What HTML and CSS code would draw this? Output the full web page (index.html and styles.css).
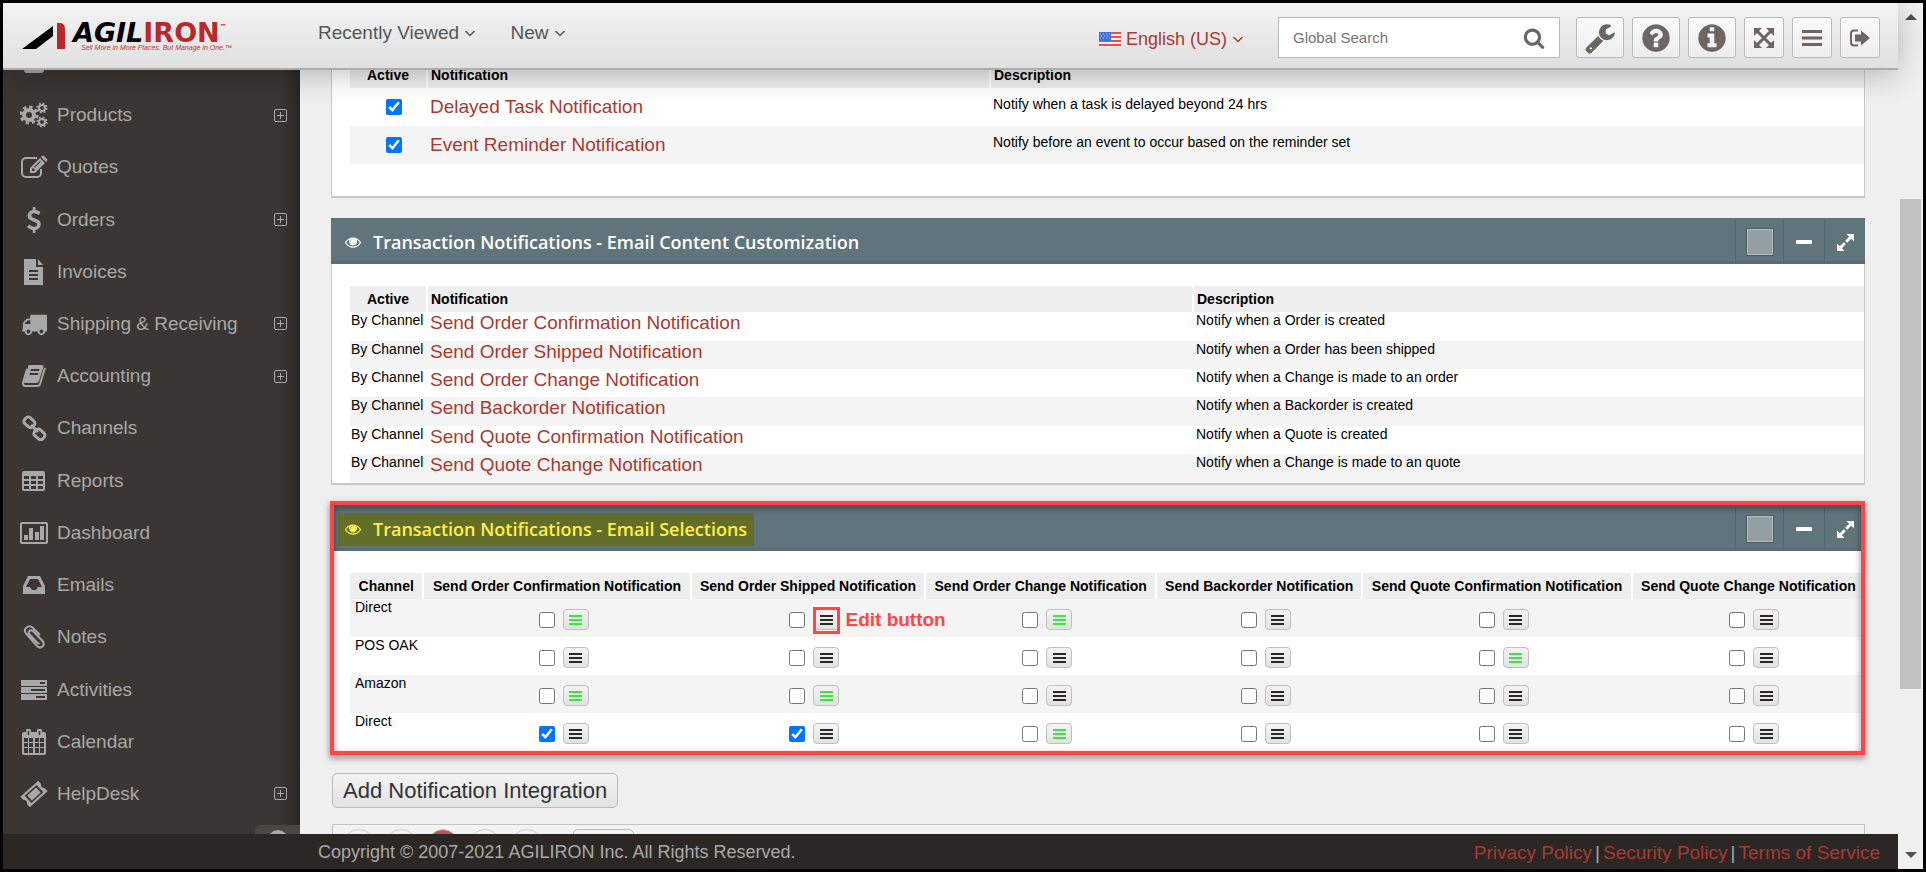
FILE: index.html
```html
<!DOCTYPE html>
<html lang="en">
<head>
    <meta charset="UTF-8">
    <meta name="viewport" content="width=device-width, initial-scale=1">
    <title>Agiliron - Notifications</title>
    <link rel="stylesheet" href="styles.css">
</head>
<body>
    <!-- icon set -->
    <svg class="sprite" aria-hidden="true">
        <symbol id="i-cogs" viewBox="0 0 28 26">
            <g fill="none" stroke="currentColor">
                <circle cx="9" cy="13" r="5" stroke-width="4"/>
                <circle cx="9" cy="13" r="8" stroke-width="3" stroke-dasharray="3.3 2.98"/>
                <circle cx="22" cy="6" r="3" stroke-width="2"/>
                <circle cx="22" cy="6" r="4.6" stroke-width="2" stroke-dasharray="1.8 1.81"/>
                <circle cx="22" cy="20" r="3" stroke-width="2"/>
                <circle cx="22" cy="20" r="4.6" stroke-width="2" stroke-dasharray="1.8 1.81"/>
            </g>
        </symbol>
        <symbol id="i-edit" viewBox="0 0 28 26">
            <path d="M17 4H6a4 4 0 0 0-4 4v11a4 4 0 0 0 4 4h11a4 4 0 0 0 4-4v-4" fill="none" stroke="currentColor" stroke-width="2"/>
            <path fill-rule="evenodd" d="M10 19v-5L20 4l5 5-10 10zM12 15v2h2l1-1-2-2zM14 13l6-6 .7.7-6 6zM21 3l1-1q1-1 2 0l3 3q1 1 0 2l-1 1z" fill="currentColor"/>
        </symbol>
        <symbol id="i-dollar" viewBox="0 0 1792 1792">
            <path fill="currentColor" d="M1362 1185q0 153-99.500 263.500t-258.500 136.500v175q0 14-9 23t-23 9h-135q-13 0-22.500-9.500t-9.500-22.500v-175q-66-9-127.500-31t-101.500-44.500-74-48-46.500-37.500-17.500-18q-17-21-2-41l103-135q7-10 23-12 15-2 24 9l2 2q113 99 243 125 37 8 74 8 81 0 142.500-43t61.500-122q0-28-15-53t-33.500-42-58.500-37.500-66-32-80-32.500q-39-16-61.500-25t-61.500-26.500-62.500-31-56.500-35.500-53.500-42.500-43.500-49-35.500-58-21-66.500-8.500-78q0-138 98-242t255-134v-180q0-13 9.500-22.500t22.500-9.500h135q14 0 23 9t9 23v176q57 6 110.500 23t87 33.500 63.500 37.500 39 29 15 14q17 18 5 38l-81 146q-8 15-23 16-14 3-27-7-3-3-14.500-12t-39-26.500-58.500-32-74.500-26-85.500-11.500q-95 0-155 43t-60 111q0 26 8.500 48t29.500 41.500 39.500 33 56 31 60.500 27 70 27.500q53 20 81 31.500t76 35 75.500 42.500 62 50 53 63.500 31.500 76.500 13 94z"/>
        </symbol>
        <symbol id="i-file" viewBox="0 0 28 26">
            <path fill="currentColor" fill-rule="evenodd" d="M4 0h12v8h7v18H4zM18 0l5 6h-5zM9 11h9v2H9zM9 15h9v2H9zM9 19h9v2H9z"/>
        </symbol>
        <symbol id="i-truck" viewBox="0 0 1792 1792">
            <path fill="currentColor" d="M640 1408q0-52-38-90t-90-38-90 38-38 90 38 90 90 38 90-38 38-90zm-384-512h384v-256h-158q-13 0-22 9l-195 195q-9 9-9 22v30zm1280 512q0-52-38-90t-90-38-90 38-38 90 38 90 90 38 90-38 38-90zm256-1088v1024q0 15-4 26.500t-13.500 18.500-16.500 11.500-23.500 6-22.500 2-25.500 0-22.500-.5q0 106-75 181t-181 75-181-75-75-181h-384q0 106-75 181t-181 75-181-75-75-181h-64q-3 0-22.500.5t-25.500 0-22.500-2-23.500-6-16.500-11.500-13.500-18.500-4-26.500q0-26 19-45t45-19v-320q0-8-.5-35t0-38 2.500-34.500 6.500-37 14-30.500 22.500-30l198-198q19-19 50.500-32t58.500-13h160v-192q0-26 19-45t45-19h1024q26 0 45 19t19 45z"/>
        </symbol>
        <symbol id="i-book" viewBox="0 0 28 26">
            <path fill="currentColor" fill-rule="evenodd" d="M9 2h13q2 0 1.500 2L19 18q-.5 2-3 2H4L8 4q.3-2 1-2zM11 6l-.5 2h8.500l.5-2zM10 10l-.5 2H18l.5-2z"/>
            <path fill="none" stroke="currentColor" stroke-width="2" d="M25 5l-5 16q-.5 2-3 2H5q-2 0-2-3L7 6"/>
        </symbol>
        <symbol id="i-chain" viewBox="0 0 28 26">
            <g fill="none" stroke="currentColor" stroke-width="3">
                <rect x="4" y="3" width="11" height="8" rx="3" transform="rotate(42 9 7)"/>
                <rect x="14" y="15" width="11" height="8" rx="3" transform="rotate(42 19 19)"/>
                <path d="M11 10l7 7"/>
            </g>
        </symbol>
        <symbol id="i-table" viewBox="0 0 28 26">
            <path fill="currentColor" fill-rule="evenodd" d="M4 3h19q2 0 2 2v16q0 2-2 2H4q-2 0-2-2V5q0-2 2-2zM4 8v3h5V8zm7 0v3h5V8zm7 0v3h5V8zM4 13v3h5v-3zm7 0v3h5v-3zm7 0v3h5v-3zM4 18v3h5v-3zm7 0v3h5v-3zm7 0v3h5v-3z"/>
        </symbol>
        <symbol id="i-chart" viewBox="0 0 28 26">
            <rect x="1" y="3" width="26" height="20" rx="1" fill="none" stroke="currentColor" stroke-width="2"/>
            <path fill="currentColor" d="M4 15h4v5H4zM9 8h4v12H9zM15 12h4v8h-4zM20 6h4v14h-4z"/>
        </symbol>
        <symbol id="i-inbox" viewBox="0 0 28 26">
            <path fill="currentColor" fill-rule="evenodd" d="M8 4h12l5 10v8H3v-8zM10 7l-4 8h4l2 3h4l2-3h4l-4-8z"/>
        </symbol>
        <symbol id="i-clip" viewBox="0 0 28 26">
            <path d="M20 11L12.500 3.500q-3-2.500-6 0t-.5 6L17 22q3 3 5.500.5t0-5.500L13 7q-2-1.500-3.500 0t0 3.500l8 8.500q1.500 1 2 0" fill="none" stroke="currentColor" stroke-width="2"/>
        </symbol>
        <symbol id="i-tasks" viewBox="0 0 28 26">
            <path fill="currentColor" fill-rule="evenodd" d="M1 3h26v6H1zM20 5v2h5V5zM1 10h26v6H1zM11 12v2h14v-2zM1 17h26v6H1zM16 19v2h9v-2z"/>
        </symbol>
        <symbol id="i-calendar" viewBox="0 0 28 26">
            <path fill="currentColor" fill-rule="evenodd" d="M4 3h20q2 0 2 2v19q0 2-2 2H4q-2 0-2-2V5q0-2 2-2zM4 9v4h4V9zm5 0v4h4V9zm6 0v4h4V9zm5 0v4h4V9zM4 14v4h4v-4zm5 0v4h4v-4zm6 0v4h4v-4zm5 0v4h4v-4zM4 19v5h4v-5zm5 0v5h4v-5zm6 0v5h4v-5zm5 0v5h4v-5z"/>
            <path d="M8.500 6V2M19.500 6V2" stroke="currentColor" stroke-width="5" stroke-linecap="round"/>
            <path d="M8.500 6V2M19.500 6V2" stroke="#3b3633" stroke-width="1.500"/>
        </symbol>
        <symbol id="i-ticket" viewBox="0 0 28 26">
            <g transform="rotate(-42 14 13)">
                <path fill="currentColor" fill-rule="evenodd" d="M2 6h24v4q-3 3 0 6v4H2v-4q3-3 0-6zM6 8v10h16V8z"/>
                <path fill="currentColor" d="M8 9.500h12v7H8z"/>
            </g>
        </symbol>
        <symbol id="i-plus" viewBox="0 0 13 13">
            <rect x=".5" y=".5" width="12" height="12" rx="1.500" fill="none" stroke="currentColor"/>
            <path d="M3 6.500h7M6.500 3v7" stroke="currentColor"/>
        </symbol>
        <symbol id="i-down" viewBox="0 0 12 12">
            <path d="M1.500 4L6 8.500 10.500 4" fill="none" stroke="currentColor" stroke-width="1.500"/>
        </symbol>
        <symbol id="i-bars" viewBox="0 0 13 10">
            <path d="M0 1h13M0 5h13M0 9h13" stroke="currentColor" stroke-width="2"/>
        </symbol>
        <symbol id="i-eye" viewBox="0 0 1792 1792">
            <path fill="currentColor" d="M1664 960q-152-236-381-353 61 104 61 225 0 185-131.500 316.500t-316.500 131.500-316.500-131.500-131.500-316.500q0-121 61-225-229 117-381 353 133 205 333.500 326.500t434.500 121.500 434.500-121.500 333.500-326.500zm-720-384q0-20-14-34t-34-14q-125 0-214.500 89.500t-89.500 214.500q0 20 14 34t34 14 34-14 14-34q0-86 61-147t147-61q20 0 34-14t14-34zm848 384q0 34-20 69-140 230-376.500 368.500t-499.500 138.500-499.500-139-376.500-368q-20-35-20-69t20-69q140-229 376.500-368t499.500-139 499.500 139 376.500 368q20 35 20 69z"/>
            <circle fill="currentColor" cx="896" cy="832" r="260"/>
        </symbol>
        <symbol id="i-search" viewBox="0 0 1792 1792">
            <path fill="currentColor" d="M1216 832q0-185-131.500-316.500t-316.500-131.500-316.500 131.500-131.500 316.500 131.500 316.500 316.500 131.500 316.500-131.500 131.500-316.500zm512 832q0 52-38 90t-90 38q-54 0-90-38l-343-342q-179 124-399 124-143 0-273.500-55.500t-225-150-150-225-55.500-273.500 55.500-273.500 150-225 225-150 273.500-55.500 273.500 55.500 225 150 150 225 55.500 273.500q0 220-124 399l343 343q37 37 37 90z"/>
        </symbol>
        <symbol id="i-wrench" viewBox="0 0 1792 1792">
            <path fill="currentColor" d="M448 1472q0-26-19-45t-45-19-45 19-19 45 19 45 45 19 45-19 19-45zm644-420l-682 682q-37 37-90 37-52 0-91-37l-106-108q-38-36-38-90 0-53 38-91l681-681q39 98 114.500 173.500t173.500 114.500zm634-435q0 39-23 106-47 134-164.500 217.500t-258.500 83.500q-185 0-316.500-131.500t-131.500-316.500 131.500-316.500 316.500-131.500q58 0 121.500 16.500t107.500 46.500q16 11 16 28t-16 28l-293 169v224l193 107q5-3 79-48.500t135.500-81 70.500-35.500q15 0 23.500 10t8.500 25z"/>
        </symbol>
        <symbol id="i-help" viewBox="0 0 1792 1792">
            <path fill="currentColor" d="M1024 1376v-192q0-14-9-23t-23-9h-192q-14 0-23 9t-9 23v192q0 14 9 23t23 9h192q14 0 23-9t9-23zm256-672q0-88-55.500-163t-138.500-116-170-41q-243 0-371 213-15 24 8 42l132 100q7 6 19 6 16 0 25-12 53-68 86-92 34-24 86-24 48 0 85.500 26t37.500 59q0 38-20 61t-68 45q-63 28-115.500 86.500t-52.500 125.500v36q0 14 9 23t23 9h192q14 0 23-9t9-23q0-19 21.500-49.500t54.500-49.500q32-18 49-28.500t46-35 44.500-48 28-60.500 12.500-81zm384 192q0 209-103 385.500t-279.500 279.500-385.500 103-385.500-103-279.500-279.500-103-385.500 103-385.500 279.500-279.500 385.500-103 385.500 103 279.500 279.500 103 385.500z"/>
        </symbol>
        <symbol id="i-info" viewBox="0 0 1792 1792">
            <path fill="currentColor" d="M1152 1376v-160q0-14-9-23t-23-9h-96v-512q0-14-9-23t-23-9h-320q-14 0-23 9t-9 23v160q0 14 9 23t23 9h96v320h-96q-14 0-23 9t-9 23v160q0 14 9 23t23 9h448q14 0 23-9t9-23zm-128-896v-160q0-14-9-23t-23-9h-192q-14 0-23 9t-9 23v160q0 14 9 23t23 9h192q14 0 23-9t9-23zm640 416q0 209-103 385.500t-279.500 279.500-385.500 103-385.500-103-279.500-279.500-103-385.500 103-385.500 279.500-279.500 385.500-103 385.500 103 279.500 279.500 103 385.500z"/>
        </symbol>
        <symbol id="i-arrows" viewBox="0 0 20 20">
            <path d="M3 3l14 14M17 3L3 17" stroke="currentColor" stroke-width="3"/>
            <path fill="currentColor" d="M0 0h8L0 8zM20 0v8l-8-8zM0 20v-8l8 8zM20 20h-8l8-8z"/>
        </symbol>
        <symbol id="i-menu" viewBox="0 0 20 17">
            <path d="M0 2h20M0 8.500h20M0 15h20" stroke="currentColor" stroke-width="3"/>
        </symbol>
        <symbol id="i-exit" viewBox="0 0 20 17">
            <path d="M8 1H4a3 3 0 0 0-3 3v9a3 3 0 0 0 3 3h4" fill="none" stroke="currentColor" stroke-width="2"/>
            <path fill="currentColor" d="M5 5h6V1l9 7.500-9 7.500v-4H5z"/>
        </symbol>
        <symbol id="i-expand" viewBox="0 0 18 18">
            <path d="M3 15L15 3" stroke="currentColor" stroke-width="3"/>
            <path fill="currentColor" d="M10 0h8v8zM0 10v8h8z"/>
            <path d="M7 7l4 4" stroke="#60747b" stroke-width="2"/>
        </symbol>
    </svg>

    <div class="window">
        <div class="app">
            <header class="topbar">
                <a class="logo" href="#" aria-label="Agiliron home">
                    <svg width="44" height="27" viewBox="0 0 44 27" aria-hidden="true">
                        <path d="M0 26L31 3v10L14 26z" fill="#000"/>
                        <path d="M35 0h4q4 1 4 6v20h-8z" fill="#b8292a"/>
                    </svg>
                    <span class="wordmark">
                        <span class="name">AGIL<b>IRON</b><small>™</small></span>
                        <span class="tagline">Sell More in More Places. But Manage in One.™</span>
                    </span>
                </a>
                <nav class="topnav">
                    <a href="#">Recently Viewed <svg><use href="#i-down"/></svg></a>
                    <a href="#">New <svg><use href="#i-down"/></svg></a>
                </nav>
                <a class="language" href="#">
                    <svg class="flag" viewBox="0 0 22 15" aria-hidden="true">
                        <path fill="#f4eeee" d="M0 0h22v15H0z"/>
                        <path stroke="#e8504c" stroke-width="2" d="M0 1h22M0 5h22M0 9h22M0 13h22"/>
                        <path fill="#3d6fd8" d="M0 0h12v9H0z"/>
                        <path stroke="#c9dcff" stroke-dasharray="1 2" d="M1 2h10M2 4h9M1 6h10"/>
                    </svg>
                    English (US)
                    <svg class="caret"><use href="#i-down"/></svg>
                </a>
                <form class="search">
                    <input type="text" placeholder="Global Search" aria-label="Global Search">
                    <button type="button" aria-label="Search"><svg><use href="#i-search"/></svg></button>
                </form>
                <div class="tools">
                    <button class="large" aria-label="Setup"><svg><use href="#i-wrench"/></svg></button>
                    <button class="large" aria-label="Help"><svg><use href="#i-help"/></svg></button>
                    <button class="large" aria-label="About"><svg><use href="#i-info"/></svg></button>
                    <button aria-label="Full screen"><svg><use href="#i-arrows"/></svg></button>
                    <button aria-label="Menu"><svg><use href="#i-menu"/></svg></button>
                    <button aria-label="Sign out"><svg><use href="#i-exit"/></svg></button>
                </div>
            </header>

            <div class="body">
                <aside class="sidebar">
                    <span class="cut-icon"></span>
                    <ul>
                        <li><a href="#"><svg><use href="#i-cogs"/></svg>Products<svg class="more"><use href="#i-plus"/></svg></a></li>
                        <li><a href="#"><svg><use href="#i-edit"/></svg>Quotes</a></li>
                        <li><a href="#"><svg><use href="#i-dollar"/></svg>Orders<svg class="more"><use href="#i-plus"/></svg></a></li>
                        <li><a href="#"><svg><use href="#i-file"/></svg>Invoices</a></li>
                        <li><a href="#"><svg><use href="#i-truck"/></svg>Shipping &amp; Receiving<svg class="more"><use href="#i-plus"/></svg></a></li>
                        <li><a href="#"><svg><use href="#i-book"/></svg>Accounting<svg class="more"><use href="#i-plus"/></svg></a></li>
                        <li><a href="#"><svg><use href="#i-chain"/></svg>Channels</a></li>
                        <li><a href="#"><svg><use href="#i-table"/></svg>Reports</a></li>
                        <li><a href="#"><svg><use href="#i-chart"/></svg>Dashboard</a></li>
                        <li><a href="#"><svg><use href="#i-inbox"/></svg>Emails</a></li>
                        <li><a href="#"><svg><use href="#i-clip"/></svg>Notes</a></li>
                        <li><a href="#"><svg><use href="#i-tasks"/></svg>Activities</a></li>
                        <li><a href="#"><svg><use href="#i-calendar"/></svg>Calendar</a></li>
                        <li><a href="#"><svg><use href="#i-ticket"/></svg>HelpDesk<svg class="more"><use href="#i-plus"/></svg></a></li>
                    </ul>
                    <button class="collapse" aria-label="Collapse menu"><span></span></button>
                </aside>

                <main class="content">
                    <section class="panel tasks">
                        <table class="list">
                            <thead>
                                <tr><th class="active">Active</th><th class="narrow">Notification</th><th>Description</th></tr>
                            </thead>
                            <tbody>
                                <tr>
                                    <td class="tick"><input type="checkbox" checked aria-label="Delayed Task Notification"></td>
                                    <td><a href="#">Delayed Task Notification</a></td>
                                    <td>Notify when a task is delayed beyond 24 hrs</td>
                                </tr>
                                <tr>
                                    <td class="tick"><input type="checkbox" checked aria-label="Event Reminder Notification"></td>
                                    <td><a href="#">Event Reminder Notification</a></td>
                                    <td>Notify before an event to occur based on the reminder set</td>
                                </tr>
                            </tbody>
                        </table>
                    </section>

                    <section class="panel">
                        <div class="panel-head">
                            <h2><svg><use href="#i-eye"/></svg>Transaction Notifications - Email Content Customization</h2>
                            <div class="panel-tools">
                                <button class="color" aria-label="Color"><span></span></button>
                                <button aria-label="Minimize"><i></i></button>
                                <button aria-label="Expand"><svg><use href="#i-expand"/></svg></button>
                            </div>
                        </div>
                        <div class="panel-body">
                            <table class="list">
                                <thead>
                                    <tr><th class="active">Active</th><th class="wide">Notification</th><th>Description</th></tr>
                                </thead>
                                <tbody>
                                    <tr><td>By Channel</td><td><a href="#">Send Order Confirmation Notification</a></td><td>Notify when a Order is created</td></tr>
                                    <tr><td>By Channel</td><td><a href="#">Send Order Shipped Notification</a></td><td>Notify when a Order has been shipped</td></tr>
                                    <tr><td>By Channel</td><td><a href="#">Send Order Change Notification</a></td><td>Notify when a Change is made to an order</td></tr>
                                    <tr><td>By Channel</td><td><a href="#">Send Backorder Notification</a></td><td>Notify when a Backorder is created</td></tr>
                                    <tr><td>By Channel</td><td><a href="#">Send Quote Confirmation Notification</a></td><td>Notify when a Quote is created</td></tr>
                                    <tr><td>By Channel</td><td><a href="#">Send Quote Change Notification</a></td><td>Notify when a Change is made to an quote</td></tr>
                                </tbody>
                            </table>
                        </div>
                    </section>

                    <section class="panel selections">
                        <div class="panel-head">
                            <h2 class="marked"><svg><use href="#i-eye"/></svg>Transaction Notifications - Email Selections</h2>
                            <div class="panel-tools">
                                <button class="color" aria-label="Color"><span></span></button>
                                <button aria-label="Minimize"><i></i></button>
                                <button aria-label="Expand"><svg><use href="#i-expand"/></svg></button>
                            </div>
                        </div>
                        <div class="panel-body">
                            <table class="matrix">
                                <thead>
                                    <tr>
                                        <th>Channel</th>
                                        <th>Send Order Confirmation Notification</th>
                                        <th>Send Order Shipped Notification</th>
                                        <th>Send Order Change Notification</th>
                                        <th>Send Backorder Notification</th>
                                        <th>Send Quote Confirmation Notification</th>
                                        <th>Send Quote Change Notification</th>
                                    </tr>
                                </thead>
                                <tbody>
                                    <tr>
                                        <td>Direct</td>
                                        <td><div class="pick"><input type="checkbox" aria-label="Order Confirmation"><button class="edit on" aria-label="Edit"><svg><use href="#i-bars"/></svg></button></div></td>
                                        <td><div class="pick"><input type="checkbox" aria-label="Order Shipped"><span class="callout"><button class="edit" aria-label="Edit"><svg><use href="#i-bars"/></svg></button><strong>Edit button</strong></span></div></td>
                                        <td><div class="pick"><input type="checkbox" aria-label="Order Change"><button class="edit on" aria-label="Edit"><svg><use href="#i-bars"/></svg></button></div></td>
                                        <td><div class="pick"><input type="checkbox" aria-label="Backorder"><button class="edit" aria-label="Edit"><svg><use href="#i-bars"/></svg></button></div></td>
                                        <td><div class="pick"><input type="checkbox" aria-label="Quote Confirmation"><button class="edit" aria-label="Edit"><svg><use href="#i-bars"/></svg></button></div></td>
                                        <td><div class="pick"><input type="checkbox" aria-label="Quote Change"><button class="edit" aria-label="Edit"><svg><use href="#i-bars"/></svg></button></div></td>
                                    </tr>
                                    <tr>
                                        <td>POS OAK</td>
                                        <td><div class="pick"><input type="checkbox" aria-label="Order Confirmation"><button class="edit" aria-label="Edit"><svg><use href="#i-bars"/></svg></button></div></td>
                                        <td><div class="pick"><input type="checkbox" aria-label="Order Shipped"><button class="edit" aria-label="Edit"><svg><use href="#i-bars"/></svg></button></div></td>
                                        <td><div class="pick"><input type="checkbox" aria-label="Order Change"><button class="edit" aria-label="Edit"><svg><use href="#i-bars"/></svg></button></div></td>
                                        <td><div class="pick"><input type="checkbox" aria-label="Backorder"><button class="edit" aria-label="Edit"><svg><use href="#i-bars"/></svg></button></div></td>
                                        <td><div class="pick"><input type="checkbox" aria-label="Quote Confirmation"><button class="edit on" aria-label="Edit"><svg><use href="#i-bars"/></svg></button></div></td>
                                        <td><div class="pick"><input type="checkbox" aria-label="Quote Change"><button class="edit" aria-label="Edit"><svg><use href="#i-bars"/></svg></button></div></td>
                                    </tr>
                                    <tr>
                                        <td>Amazon</td>
                                        <td><div class="pick"><input type="checkbox" aria-label="Order Confirmation"><button class="edit on" aria-label="Edit"><svg><use href="#i-bars"/></svg></button></div></td>
                                        <td><div class="pick"><input type="checkbox" aria-label="Order Shipped"><button class="edit on" aria-label="Edit"><svg><use href="#i-bars"/></svg></button></div></td>
                                        <td><div class="pick"><input type="checkbox" aria-label="Order Change"><button class="edit" aria-label="Edit"><svg><use href="#i-bars"/></svg></button></div></td>
                                        <td><div class="pick"><input type="checkbox" aria-label="Backorder"><button class="edit" aria-label="Edit"><svg><use href="#i-bars"/></svg></button></div></td>
                                        <td><div class="pick"><input type="checkbox" aria-label="Quote Confirmation"><button class="edit" aria-label="Edit"><svg><use href="#i-bars"/></svg></button></div></td>
                                        <td><div class="pick"><input type="checkbox" aria-label="Quote Change"><button class="edit" aria-label="Edit"><svg><use href="#i-bars"/></svg></button></div></td>
                                    </tr>
                                    <tr>
                                        <td>Direct</td>
                                        <td><div class="pick"><input type="checkbox" checked aria-label="Order Confirmation"><button class="edit" aria-label="Edit"><svg><use href="#i-bars"/></svg></button></div></td>
                                        <td><div class="pick"><input type="checkbox" checked aria-label="Order Shipped"><button class="edit" aria-label="Edit"><svg><use href="#i-bars"/></svg></button></div></td>
                                        <td><div class="pick"><input type="checkbox" aria-label="Order Change"><button class="edit on" aria-label="Edit"><svg><use href="#i-bars"/></svg></button></div></td>
                                        <td><div class="pick"><input type="checkbox" aria-label="Backorder"><button class="edit" aria-label="Edit"><svg><use href="#i-bars"/></svg></button></div></td>
                                        <td><div class="pick"><input type="checkbox" aria-label="Quote Confirmation"><button class="edit" aria-label="Edit"><svg><use href="#i-bars"/></svg></button></div></td>
                                        <td><div class="pick"><input type="checkbox" aria-label="Quote Change"><button class="edit" aria-label="Edit"><svg><use href="#i-bars"/></svg></button></div></td>
                                    </tr>
                                </tbody>
                            </table>
                        </div>
                    </section>

                    <button class="add">Add Notification Integration</button>

                    <div class="pager">
                        <span class="dot"></span>
                        <span class="dot"></span>
                        <span class="dot current"></span>
                        <span class="dot"></span>
                        <span class="dot"></span>
                        <span class="size"></span>
                    </div>
                </main>
            </div>

            <footer class="footer">
                <span>Copyright © 2007-2021 AGILIRON Inc. All Rights Reserved.</span>
                <div class="legal">
                    <a href="#">Privacy Policy</a>
                    <span>|</span>
                    <a href="#">Security Policy</a>
                    <span>|</span>
                    <a href="#">Terms of Service</a>
                </div>
            </footer>
        </div>

        <div class="scrollbar">
            <span class="arrow up"></span>
            <span class="thumb"></span>
            <span class="arrow down"></span>
        </div>
    </div>
</body>
</html>
```

FILE: styles.css
```css
* {
    box-sizing: border-box;
}

body {
    margin: 0;
    padding: 3px;
    height: 100vh;
    overflow: hidden;
    background: #000;
    color: #000;
    font-family: "Liberation Sans", Arial, sans-serif;
    font-size: 14px;
    line-height: 16px;
}

a {
    color: #a93a30;
    text-decoration: none;
}

button {
    padding: 0;
    font-family: inherit;
    cursor: pointer;
}

input[type="checkbox"] {
    width: 16px;
    height: 16px;
    margin: 0;
}

.sprite {
    position: absolute;
    width: 0;
    height: 0;
}

.window {
    display: grid;
    grid-template-columns: 1fr 25px;
    height: 100%;
}

.app {
    display: flex;
    flex-direction: column;
    min-width: 0;
    min-height: 0;
}

/* top bar */
.topbar {
    display: flex;
    align-items: flex-start;
    height: 67px;
    padding: 14px 18px 0 19px;
    background: linear-gradient(#f3f3f3, #e0e0e0);
    border-bottom: 2px solid #acacac;
    box-shadow: 0 4px 30px rgba(0, 0, 0, 0.25);
    z-index: 2;
}

.logo {
    display: flex;
    gap: 7px;
    width: 296px;
    padding-top: 6px;
}

.wordmark {
    display: flex;
    flex-direction: column;
}

.name {
    color: #000;
    font: italic bold 27px/20px "DejaVu Sans", sans-serif;
}

.name b {
    color: #b8292a;
    font-style: normal;
}

.name small {
    color: #b8292a;
    font-size: 7px;
    vertical-align: top;
    line-height: 8px;
}

.tagline {
    padding-left: 8px;
    color: #c4302b;
    font-size: 7px;
    font-style: italic;
    line-height: 10px;
}

.topnav {
    display: flex;
    gap: 34px;
    flex: 1;
    padding-top: 5px;
}

.topnav a {
    color: #555;
    font-size: 19px;
    line-height: 22px;
}

.topnav svg,
.caret {
    width: 12px;
    height: 12px;
}

.language {
    display: flex;
    align-items: center;
    gap: 5px;
    margin: 11px 34px 0 0;
    font-size: 18px;
    line-height: 22px;
}

.flag {
    width: 22px;
    height: 15px;
}

.search {
    display: flex;
    align-items: center;
    width: 282px;
    height: 41px;
    margin-right: 16px;
    background: #fff;
    border: 1px solid #bbb;
}

.search input {
    flex: 1;
    min-width: 0;
    padding: 0 14px;
    border: 0;
    background: none;
    font: 15px "Liberation Sans", Arial, sans-serif;
}

.search button {
    width: 50px;
    border: 0;
    background: none;
    color: #6b6664;
}

.search svg {
    display: block;
    width: 22px;
    height: 22px;
    margin: 0 auto;
}

.tools {
    display: flex;
    gap: 8px;
}

.tools button {
    display: grid;
    place-items: center;
    width: 40px;
    height: 41px;
    border: 1px solid #bbb;
    border-radius: 3px;
    background: linear-gradient(#fafafa, #eee);
    color: #6b6664;
}

.tools svg {
    width: 20px;
    height: 20px;
}

.tools .large {
    width: 48px;
}

.tools .large svg {
    width: 32px;
    height: 32px;
}

/* sidebar */
.body {
    display: grid;
    grid-template-columns: 297px 1fr;
    flex: 1;
    min-height: 0;
    overflow: hidden;
    background: #efefef;
}

.sidebar {
    display: flex;
    flex-direction: column;
    min-height: 0;
    background: linear-gradient(to left, #2a2624, #3b3633 20px);
}

.cut-icon {
    flex: none;
    width: 20px;
    height: 3px;
    margin-left: 21px;
    background: #a8a8a8;
    border-radius: 0 0 4px 4px;
}

.sidebar ul {
    display: flex;
    flex-direction: column;
    flex: 1;
    margin: 0;
    padding: 16px 13px 5px;
    list-style: none;
}

.sidebar li {
    display: flex;
    flex: 1;
}

.sidebar a {
    display: flex;
    align-items: center;
    flex: 1;
    gap: 9px;
    padding-left: 4px;
    color: #a8a8a8;
    font-size: 19px;
}

.sidebar svg {
    width: 28px;
    height: 26px;
}

.sidebar .more {
    width: 13px;
    height: 13px;
    margin-left: auto;
}

.collapse {
    display: flex;
    justify-content: center;
    flex: none;
    align-self: flex-end;
    width: 45px;
    height: 9px;
    padding-top: 5px;
    overflow: hidden;
    border: 0;
    border-radius: 6px 0 0 0;
    background: #4a4747;
}

.collapse span {
    flex: none;
    width: 20px;
    height: 20px;
    border-radius: 50%;
    background: #a8a8a8;
}

/* content */
.content {
    min-width: 0;
    min-height: 0;
    overflow: hidden;
    padding: 0 33px 0 31px;
}

.panel {
    margin-bottom: 20px;
    background: #fff;
    border: 1px solid #c8c8c8;
    border-top: 0;
    border-bottom-width: 2px;
}

.tasks {
    margin-top: -8px;
    padding: 0 0 32px 18px;
}

.panel-head {
    display: flex;
    justify-content: space-between;
    align-items: center;
    height: 46px;
    margin: 0 -1px;
    padding: 2px 0 0 7px;
    background: #60747b;
    box-shadow: inset 0 -3px #5a6d75;
}

.panel-head h2 {
    display: flex;
    align-items: center;
    gap: 12px;
    margin: 0;
    padding: 0 7px;
    color: #fff;
    font: 600 18px/33px "Trebuchet MS", "Open Sans", sans-serif;
}

.panel-head h2 svg {
    width: 16px;
    height: 16px;
}

.panel-head .marked {
    background: #636f28;
    color: #ffef4a;
}

.panel-tools {
    display: flex;
    align-self: stretch;
}

.panel-tools button {
    display: grid;
    place-items: center;
    width: 41px;
    border: 0;
    border-left: 1px solid #54666d;
    background: none;
    color: #fff;
}

.panel-tools .color {
    width: 48px;
}

.color span {
    width: 26px;
    height: 26px;
    background: #929fa4;
    border: 1px solid #b4bdc1;
    outline: 1px solid #4b5b61;
}

.panel-tools i {
    width: 16px;
    height: 4px;
    background: #fff;
    border-radius: 1px;
}

.panel-tools svg {
    width: 17px;
    height: 17px;
}

.panel-body {
    padding: 22px 0 1px 18px;
}

table {
    width: 100%;
    border-collapse: collapse;
}

th {
    height: 26px;
    padding: 0 6px;
    background: #eee;
    border-right: 2px solid #fff;
    text-align: center;
    white-space: nowrap;
}

th:last-child {
    border-right: 0;
}

td {
    padding: 0 4px 0 3px;
    vertical-align: top;
}

.list th {
    padding: 0 3px;
    text-align: left;
}

.list .active {
    width: 77px;
    text-align: center;
}

.list .narrow {
    width: 563px;
}

.list .wide {
    width: 766px;
}

.list td {
    height: 28px;
}

.list tr:nth-child(3n + 1) td {
    height: 29px;
}

.list td:first-child {
    padding: 0 1px;
    white-space: nowrap;
}

.list td a {
    font-size: 19px;
    line-height: 22px;
}

.list tbody tr:nth-child(even),
.matrix tbody tr:nth-child(odd) {
    background: #f4f4f4;
}

.tasks .list tr td {
    height: 38px;
    padding-top: 8px;
}

.tasks .list tr .tick {
    padding: 11px 0 0 11px;
    text-align: center;
}

.tick input {
    display: block;
    margin: 0 auto;
}

.matrix td {
    height: 38px;
}

.matrix td:first-child {
    padding-left: 5px;
}

/* edit grid */
.selections {
    position: relative;
}

.selections .panel-body {
    padding-bottom: 0;
}

.selections::after {
    content: "";
    position: absolute;
    inset: -4px -1px -4px -2px;
    border: 4px solid #ff4545;
    filter: drop-shadow(0 3px 3px rgba(0, 0, 0, 0.5));
    pointer-events: none;
}

.pick {
    display: flex;
    justify-content: center;
    align-items: center;
    gap: 8px;
    padding: 10px 0 0 14px;
}

.edit {
    display: grid;
    place-items: center;
    width: 26px;
    height: 21px;
    border: 1px solid #c0c0c0;
    border-radius: 4px;
    background: linear-gradient(#f4f4f4, #e2e2e2);
    color: #2b2725;
}

.edit.on {
    color: #3fe53f;
}

.edit svg {
    width: 13px;
    height: 10px;
}

.callout {
    position: relative;
}

.callout::after {
    content: "";
    position: absolute;
    inset: -2px -1px -4px 0;
    border: 3px solid #ff4545;
}

.callout strong {
    position: absolute;
    left: 32px;
    top: 0;
    color: #ff4545;
    font-size: 19px;
    line-height: 22px;
    white-space: nowrap;
}

.add {
    display: block;
    height: 35px;
    margin: 0 0 16px 1px;
    padding: 0 10px;
    border: 1px solid #bbb;
    border-radius: 5px;
    background: linear-gradient(#f4f4f4, #e2e2e2);
    color: #333;
    font-size: 22px;
}

.pager {
    display: flex;
    gap: 10px;
    margin-left: 1px;
    padding: 4px 10px;
    background: #f3f3f3;
    border: 1px solid #c4c4c4;
}

.dot {
    width: 32px;
    height: 32px;
    border: 1px solid #ccc;
    border-radius: 50%;
}

.dot.current {
    background: #b9564a;
}

.size {
    width: 61px;
    height: 32px;
    margin-left: 20px;
    border: 1px solid #bbb;
    border-radius: 5px;
}

/* footer */
.footer {
    display: flex;
    justify-content: space-between;
    align-items: center;
    height: 35px;
    padding: 0 18px 0 315px;
    background: #2b2725;
    color: #a8a8a8;
    font-size: 18px;
    z-index: 2;
}

.legal {
    display: flex;
    gap: 3px;
    padding-top: 2px;
    font-size: 19px;
}

/* page scrollbar */
.scrollbar {
    display: flex;
    flex-direction: column;
    align-items: center;
    padding: 11px 0;
    background: #f0f0f0;
}

.thumb {
    width: 21px;
    flex: 0 0 58%;
    margin: 179px 0 auto;
    background: #c1c1c1;
}

.arrow {
    border: 6px solid transparent;
}

.arrow.up {
    border-top: 0;
    border-bottom-color: #505050;
}

.arrow.down {
    border-bottom: 0;
    border-top-color: #505050;
}
```
